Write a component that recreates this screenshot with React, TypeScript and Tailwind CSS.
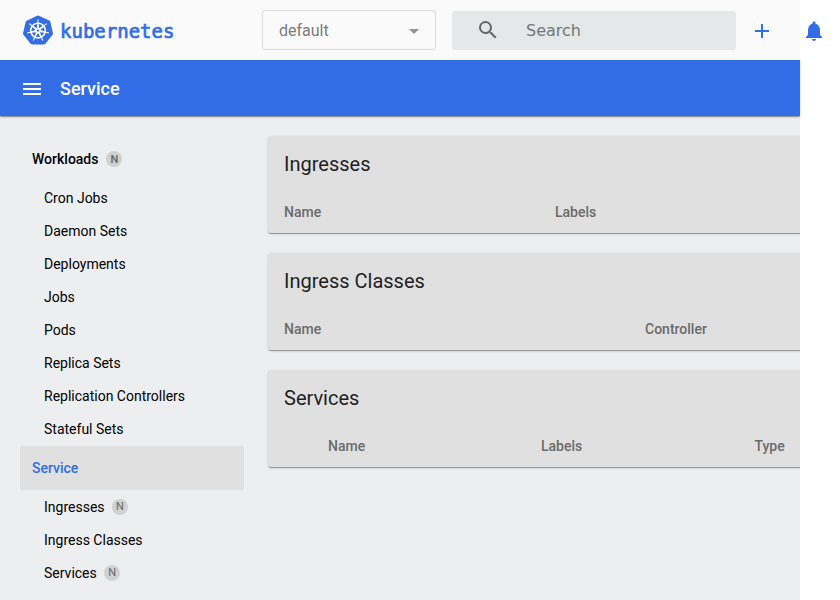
import { MdAdd, MdArrowDropDown, MdMenu, MdNotifications, MdSearch } from "react-icons/md";
import { SiKubernetes } from "react-icons/si";

type NavItem = { label: string; namespaced?: boolean };

const workloads: NavItem[] = [
  { label: "Cron Jobs" },
  { label: "Daemon Sets" },
  { label: "Deployments" },
  { label: "Jobs" },
  { label: "Pods" },
  { label: "Replica Sets" },
  { label: "Replication Controllers" },
  { label: "Stateful Sets" },
];

const services: NavItem[] = [
  { label: "Ingresses", namespaced: true },
  { label: "Ingress Classes" },
  { label: "Services", namespaced: true },
];

function Badge({ bold = false }: { bold?: boolean }) {
  return (
    <span
      className={`flex size-4 items-center justify-center rounded-full bg-[#d0d1d1] pt-px text-[11px] leading-4 text-[#666] ${bold ? "ml-2 font-medium" : "ml-[7.5px] font-normal"}`}
    >
      N
    </span>
  );
}

function NavList({ items }: { items: NavItem[] }) {
  return (
    <ul>
      {items.map((item) => (
        <li key={item.label} className="flex h-[33px] items-center pl-6 text-sm text-black">
          {item.label}
          {item.namespaced && <Badge />}
        </li>
      ))}
    </ul>
  );
}

type Column = { label: string; width: string };

function Card({ title, columns, inset = "pl-4" }: { title: string; columns: Column[]; inset?: string }) {
  return (
    <section className="h-[97px] w-[560px] rounded-[3px] bg-[#e0e0e0] shadow-[0_2px_1px_-1px_rgba(0,0,0,0.2),0_1px_1px_0_rgba(0,0,0,0.14),0_1px_3px_0_rgba(0,0,0,0.12)]">
      <h2 className="flex h-14 items-center pl-4 text-xl text-[#1f1f1f]">{title}</h2>
      <div className={`flex h-10 items-center text-sm font-medium text-[#6b6b6b] ${inset}`}>
        {columns.map((column) => (
          <span key={column.label} className={`shrink-0 ${column.width}`}>
            {column.label}
          </span>
        ))}
      </div>
    </section>
  );
}

export default function App() {
  return (
    <div className="h-[600px] w-[840px] overflow-hidden bg-white font-['Roboto',sans-serif]">
      <header className="flex h-[60px] w-[800px] items-center bg-[#fafafa]">
        <div className="flex w-[262px] shrink-0 items-center pl-[23px] text-[#326de6]">
          <SiKubernetes className="size-[30px] shrink-0" />
          <span className="mt-[2px] ml-[7px] font-['DejaVu_Sans_Mono',monospace] text-[19px] leading-none [-webkit-text-stroke:0.7px_#326de6]">
            kubernetes
          </span>
        </div>
        <div className="flex h-10 w-[174px] shrink-0 items-center justify-between rounded-[3px] border border-[#dcdcdc] pt-[2px] pr-[9px] pl-4 text-base text-[#7b7b7b]">
          default
          <MdArrowDropDown className="size-6 text-[#929292]" />
        </div>
        <div className="mt-px ml-4 flex h-[39px] w-[284px] shrink-0 items-center rounded-[3px] bg-[#e4e8e9] pl-6 text-[#757575]">
          <MdSearch className="mb-px size-6 text-[#666]" />
          <span className="ml-[26px] font-['DejaVu_Sans',sans-serif] text-base">Search</span>
        </div>
        <MdAdd className="mt-[2px] ml-[14px] size-6 shrink-0 text-[#326de6]" />
        <MdNotifications className="mt-[2px] ml-7 size-6 shrink-0 text-[#326de6]" />
      </header>
      <div className="relative flex h-14 w-[800px] items-center bg-[#326de6] pl-5 text-white shadow-[0_2px_1px_-1px_rgba(0,0,0,0.2),0_1px_1px_0_rgba(0,0,0,0.14),0_1px_3px_0_rgba(0,0,0,0.12)]">
        <MdMenu className="mt-[2px] size-6" />
        <h1 className="mt-[2px] ml-4 text-lg font-medium">Service</h1>
      </div>
      <div className="flex h-[484px] w-[800px] overflow-hidden bg-[#edeef0]">
        <nav className="w-[268px] shrink-0 pt-[21px] pr-6 pl-5">
          <div className="flex h-11 items-center pl-3 text-sm font-medium text-black">
            Workloads
            <Badge bold />
          </div>
          <NavList items={workloads} />
          <div className="mt-px flex h-11 items-center rounded-[2px] bg-[#e0e0e0] pl-3 text-sm font-medium text-[#326de6]">
            Service
          </div>
          <NavList items={services} />
        </nav>
        <main className="flex shrink-0 flex-col gap-5 pt-5">
          <Card
            title="Ingresses"
            columns={[
              { label: "Name", width: "w-[271px]" },
              { label: "Labels", width: "w-[200px]" },
            ]}
          />
          <Card
            title="Ingress Classes"
            columns={[
              { label: "Name", width: "w-[361px]" },
              { label: "Controller", width: "w-[120px]" },
            ]}
          />
          <Card
            title="Services"
            inset="pl-[60px]"
            columns={[
              { label: "Name", width: "w-[213px]" },
              { label: "Labels", width: "w-[213.5px]" },
              { label: "Type", width: "w-10" },
            ]}
          />
        </main>
      </div>
    </div>
  );
}
